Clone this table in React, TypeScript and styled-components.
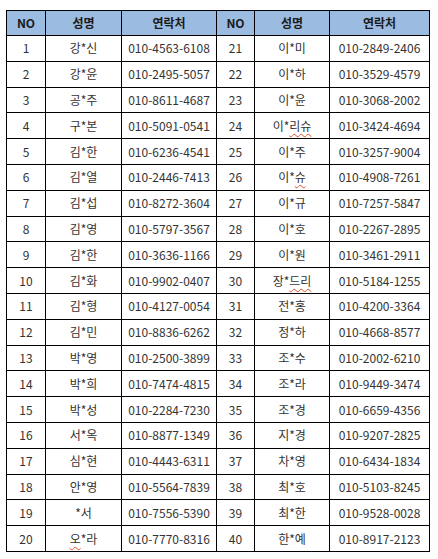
import React from "react";
import styled, { createGlobalStyle } from "styled-components";

const Global = createGlobalStyle`
  html, body { margin: 0; padding: 0; background: #ffffff; }
  body { font-family: "Noto Sans CJK KR", "Noto Sans", sans-serif; }
`;

const Page = styled.div`
  padding: 9px 0 0 6px;
`;

const Grid = styled.div`
  display: inline-grid;
  grid-template-columns: 38px 75px 94px 37px 74px 99px;
  grid-template-rows: 24px repeat(20, 24.8px);
  gap: 1px;
  padding: 1px;
  background: #000000;
`;

const Cell = styled.div<{ $head?: boolean }>`
  display: flex;
  align-items: center;
  justify-content: center;
  background: ${(p) => (p.$head ? "#9bbbe1" : "#ffffff")};
  color: ${(p) => (p.$head ? "#1a1a1a" : "#333333")};
  font-size: 12px;
  font-weight: ${(p) => (p.$head ? 700 : 400)};
  line-height: 1;
  white-space: nowrap;
`;

const Squiggle = styled.span`
  text-decoration: underline wavy #e0502a;
  text-decoration-thickness: 1px;
  text-underline-offset: 2px;
`;

type Entry = { no: number; name: React.ReactNode; phone: string };

const left: Entry[] = [
  { no: 1, name: "강*신", phone: "010-4563-6108" },
  { no: 2, name: "강*윤", phone: "010-2495-5057" },
  { no: 3, name: "공*주", phone: "010-8611-4687" },
  { no: 4, name: "구*본", phone: "010-5091-0541" },
  { no: 5, name: "김*한", phone: "010-6236-4541" },
  { no: 6, name: "김*열", phone: "010-2446-7413" },
  { no: 7, name: "김*섭", phone: "010-8272-3604" },
  { no: 8, name: "김*영", phone: "010-5797-3567" },
  { no: 9, name: "김*한", phone: "010-3636-1166" },
  { no: 10, name: "김*화", phone: "010-9902-0407" },
  { no: 11, name: "김*형", phone: "010-4127-0054" },
  { no: 12, name: "김*민", phone: "010-8836-6262" },
  { no: 13, name: "박*영", phone: "010-2500-3899" },
  { no: 14, name: "박*희", phone: "010-7474-4815" },
  { no: 15, name: "박*성", phone: "010-2284-7230" },
  { no: 16, name: "서*옥", phone: "010-8877-1349" },
  { no: 17, name: "심*현", phone: "010-4443-6311" },
  { no: 18, name: "안*영", phone: "010-5564-7839" },
  { no: 19, name: "*서", phone: "010-7556-5390" },
  { no: 20, name: <><Squiggle>오</Squiggle>*라</>, phone: "010-7770-8316" },
];

const right: Entry[] = [
  { no: 21, name: "이*미", phone: "010-2849-2406" },
  { no: 22, name: "이*하", phone: "010-3529-4579" },
  { no: 23, name: "이*윤", phone: "010-3068-2002" },
  { no: 24, name: <>이*<Squiggle>리슈</Squiggle></>, phone: "010-3424-4694" },
  { no: 25, name: "이*주", phone: "010-3257-9004" },
  { no: 26, name: <>이*<Squiggle>슈</Squiggle></>, phone: "010-4908-7261" },
  { no: 27, name: "이*규", phone: "010-7257-5847" },
  { no: 28, name: "이*호", phone: "010-2267-2895" },
  { no: 29, name: "이*원", phone: "010-3461-2911" },
  { no: 30, name: <>장*<Squiggle>드리</Squiggle></>, phone: "010-5184-1255" },
  { no: 31, name: "전*홍", phone: "010-4200-3364" },
  { no: 32, name: "정*하", phone: "010-4668-8577" },
  { no: 33, name: "조*수", phone: "010-2002-6210" },
  { no: 34, name: "조*라", phone: "010-9449-3474" },
  { no: 35, name: "조*경", phone: "010-6659-4356" },
  { no: 36, name: "지*경", phone: "010-9207-2825" },
  { no: 37, name: "차*영", phone: "010-6434-1834" },
  { no: 38, name: "최*호", phone: "010-5103-8245" },
  { no: 39, name: "최*한", phone: "010-9528-0028" },
  { no: 40, name: "한*예", phone: "010-8917-2123" },
];

const headers = ["NO", "성명", "연락처", "NO", "성명", "연락처"];

export default function App() {
  return (
    <Page>
      <Global />
      <Grid>
        {headers.map((h, i) => (
          <Cell key={`h${i}`} $head>
            {h}
          </Cell>
        ))}
        {left.map((l, i) => {
          const r = right[i];
          return (
            <React.Fragment key={l.no}>
              <Cell>{l.no}</Cell>
              <Cell>{l.name}</Cell>
              <Cell>{l.phone}</Cell>
              <Cell>{r.no}</Cell>
              <Cell>{r.name}</Cell>
              <Cell>{r.phone}</Cell>
            </React.Fragment>
          );
        })}
      </Grid>
    </Page>
  );
}
